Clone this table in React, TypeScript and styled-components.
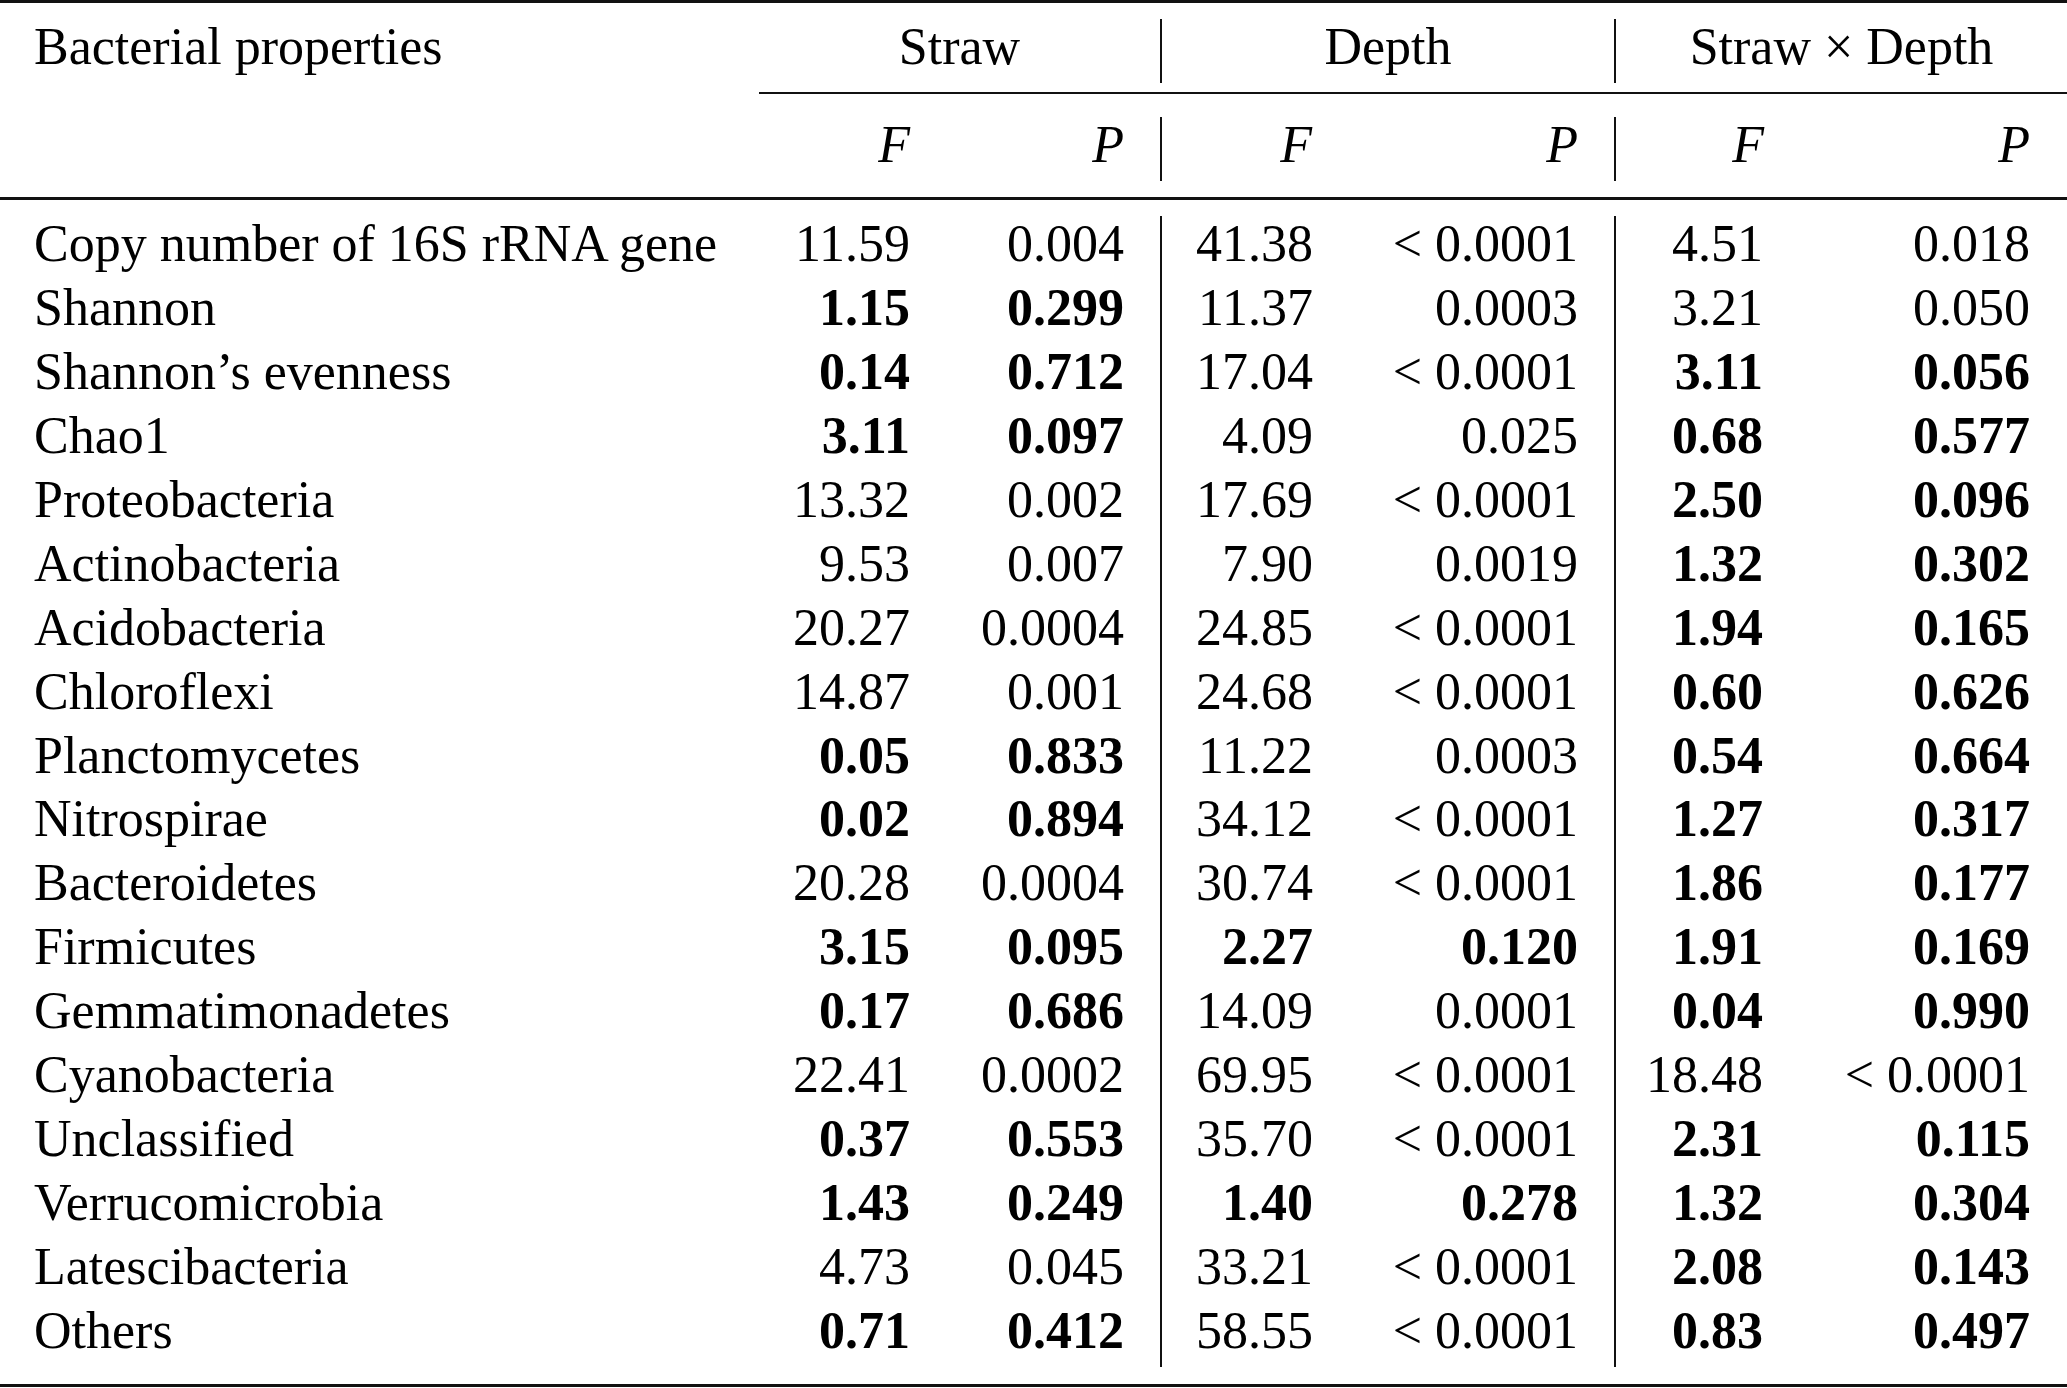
import { createGlobalStyle } from 'styled-components';
import styled from 'styled-components';

type TGroup = [string, string, boolean];
type TRow = { label: string; groups: TGroup[] };

const LT = '< 0.0001';

const rows: TRow[] = [
  { label: 'Copy number of 16S rRNA gene', groups: [['11.59', '0.004', false], ['41.38', LT, false], ['4.51', '0.018', false]] },
  { label: 'Shannon', groups: [['1.15', '0.299', true], ['11.37', '0.0003', false], ['3.21', '0.050', false]] },
  { label: 'Shannon\u2019s evenness', groups: [['0.14', '0.712', true], ['17.04', LT, false], ['3.11', '0.056', true]] },
  { label: 'Chao1', groups: [['3.11', '0.097', true], ['4.09', '0.025', false], ['0.68', '0.577', true]] },
  { label: 'Proteobacteria', groups: [['13.32', '0.002', false], ['17.69', LT, false], ['2.50', '0.096', true]] },
  { label: 'Actinobacteria', groups: [['9.53', '0.007', false], ['7.90', '0.0019', false], ['1.32', '0.302', true]] },
  { label: 'Acidobacteria', groups: [['20.27', '0.0004', false], ['24.85', LT, false], ['1.94', '0.165', true]] },
  { label: 'Chloroflexi', groups: [['14.87', '0.001', false], ['24.68', LT, false], ['0.60', '0.626', true]] },
  { label: 'Planctomycetes', groups: [['0.05', '0.833', true], ['11.22', '0.0003', false], ['0.54', '0.664', true]] },
  { label: 'Nitrospirae', groups: [['0.02', '0.894', true], ['34.12', LT, false], ['1.27', '0.317', true]] },
  { label: 'Bacteroidetes', groups: [['20.28', '0.0004', false], ['30.74', LT, false], ['1.86', '0.177', true]] },
  { label: 'Firmicutes', groups: [['3.15', '0.095', true], ['2.27', '0.120', true], ['1.91', '0.169', true]] },
  { label: 'Gemmatimonadetes', groups: [['0.17', '0.686', true], ['14.09', '0.0001', false], ['0.04', '0.990', true]] },
  { label: 'Cyanobacteria', groups: [['22.41', '0.0002', false], ['69.95', LT, false], ['18.48', LT, false]] },
  { label: 'Unclassified', groups: [['0.37', '0.553', true], ['35.70', LT, false], ['2.31', '0.115', true]] },
  { label: 'Verrucomicrobia', groups: [['1.43', '0.249', true], ['1.40', '0.278', true], ['1.32', '0.304', true]] },
  { label: 'Latescibacteria', groups: [['4.73', '0.045', false], ['33.21', LT, false], ['2.08', '0.143', true]] },
  { label: 'Others', groups: [['0.71', '0.412', true], ['58.55', LT, false], ['0.83', '0.497', true]] },
];

const groupNames = ['Straw', 'Depth', 'Straw \u00d7 Depth'];

// right padding of the value columns (F, P per group)
const valuePad = [[23, 36], [37, 36], [37, 37]];
const headPad = [[23, 36], [38, 36], [36, 37]];

const GlobalStyle = createGlobalStyle`
  html, body {
    margin: 0;
    padding: 0;
    background: #fff;
  }
  body {
    font-family: 'Liberation Serif', 'Times New Roman', serif;
    color: #000;
  }
`;

const App = () => {
  return (
    <>
      <GlobalStyle />
      <Table>
        <Rule $weight={3} />
        <Row $top={16}>
          <LabelCell>Bacterial properties</LabelCell>
          {groupNames.map((name, i) => (
            <GroupHead key={name} $divider={i > 0}>
              {name}
            </GroupHead>
          ))}
        </Row>
        <Rule $weight={2} $top={9} $indent={759} />
        <Row $top={23}>
          <LabelCell />
          {groupNames.map((name, i) => [
            <ValueCell key={name + 'F'} $divider={i > 0} $pad={headPad[i][0]}>
              <Italic>F</Italic>
            </ValueCell>,
            <ValueCell key={name + 'P'} $pad={headPad[i][1]}>
              <Italic>P</Italic>
            </ValueCell>,
          ])}
        </Row>
        <Rule $weight={3} $top={16} />
        <Body>
          {rows.map((row) => (
            <Row key={row.label} $body>
              <LabelCell>{row.label}</LabelCell>
              {row.groups.map(([f, p, bold], i) => [
                <ValueCell key={i + 'F'} $divider={i > 0} $bold={bold} $pad={valuePad[i][0]}>
                  {f}
                </ValueCell>,
                <ValueCell key={i + 'P'} $bold={bold} $pad={valuePad[i][1]}>
                  {p}
                </ValueCell>,
              ])}
            </Row>
          ))}
        </Body>
        <Rule $weight={3} $top={17} />
      </Table>
    </>
  );
};

export default App;

const Table = styled.div`
  width: 2067px;
  display: flex;
  flex-direction: column;
`;

const Rule = styled.div<{ $weight: number; $top?: number; $indent?: number }>`
  height: ${(p) => p.$weight}px;
  margin-top: ${(p) => p.$top || 0}px;
  margin-left: ${(p) => p.$indent || 0}px;
  background: #111;
`;

const Body = styled.div`
  margin-top: 16px;
  display: flex;
  flex-direction: column;
`;

const Row = styled.div<{ $top?: number; $body?: boolean }>`
  display: grid;
  grid-template-columns: 759px 174px 227px 190px 264px 186px 267px;
  height: ${(p) => (p.$body ? '63.95px' : '64px')};
  margin-top: ${(p) => p.$top || 0}px;
  font-size: 52px;
  line-height: 56px;
`;

const LabelCell = styled.div`
  padding-left: 34px;
  white-space: nowrap;
`;

const GroupHead = styled.div<{ $divider?: boolean }>`
  grid-column: span 2;
  text-align: center;
  white-space: nowrap;
  border-left: ${(p) => (p.$divider ? '2px solid #111' : 'none')};
`;

const ValueCell = styled.div<{ $divider?: boolean; $bold?: boolean; $pad: number }>`
  text-align: right;
  white-space: nowrap;
  padding-right: ${(p) => p.$pad}px;
  font-weight: ${(p) => (p.$bold ? 700 : 400)};
  border-left: ${(p) => (p.$divider ? '2px solid #111' : 'none')};
`;

const Italic = styled.span`
  font-style: italic;
`;
